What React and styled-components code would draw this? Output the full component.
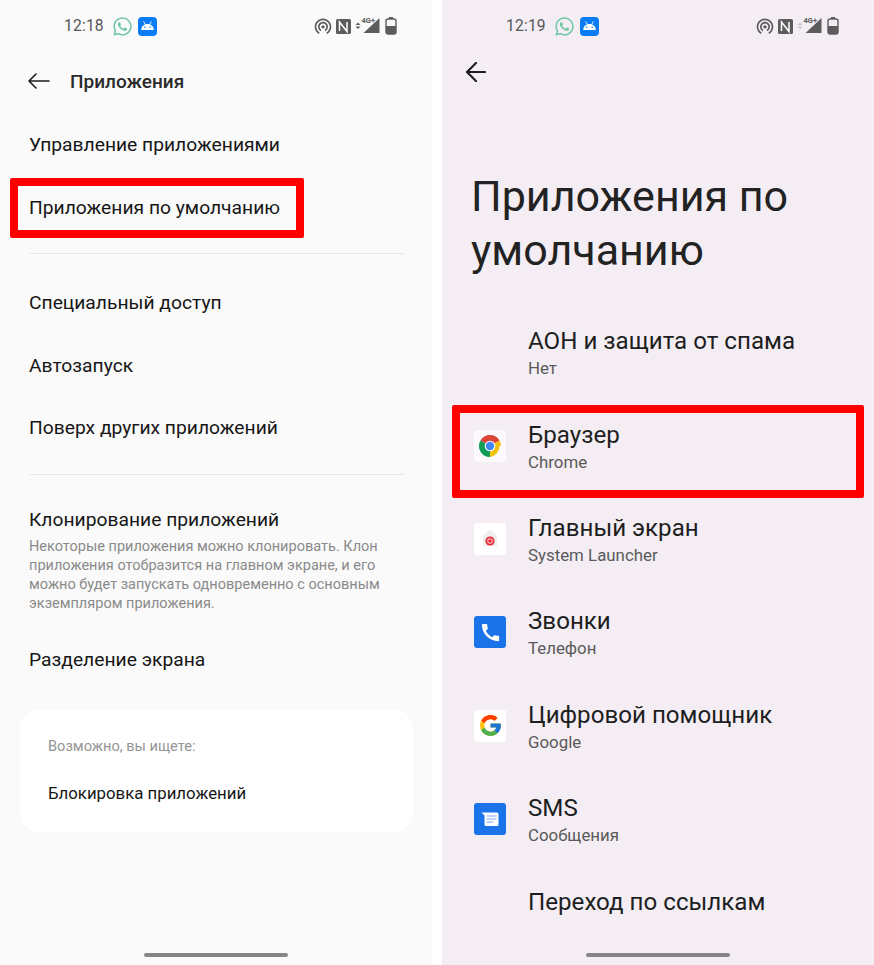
import React from 'react';
import styled, { createGlobalStyle } from 'styled-components';
import { FaWhatsapp } from 'react-icons/fa';
import { MdCall, MdWifiTethering } from 'react-icons/md';
import { FcGoogle } from 'react-icons/fc';

const GlobalStyle = createGlobalStyle`
  html, body {
    margin: 0;
    padding: 0;
    background: #ffffff;
  }
  * {
    box-sizing: border-box;
  }
`;

const Page = styled.div`
  display: grid;
  grid-template-columns: 432px 432px;
  column-gap: 10px;
  width: 874px;
  height: 965px;
  overflow: hidden;
  font-family: Roboto, "Noto Sans", sans-serif;
`;

const Phone = styled.section`
  display: flex;
  flex-direction: column;
  height: 965px;
  background: ${({ $bg }) => $bg};
  color: #1a1a1a;
`;

const Status = styled.div`
  display: flex;
  align-items: center;
  flex: none;
  height: 52px;
  padding: 0 35px 0 64px;
`;

const Time = styled.span`
  font-size: 15.6px;
  letter-spacing: 0.2px;
  color: #555555;
  width: 48px;
`;

const Tray = styled.div`
  display: flex;
  align-items: center;
  margin-left: auto;
`;

const Glyph = styled.svg`
  display: block;
  flex: none;
  margin-left: ${({ $gap }) => $gap || 0}px;
`;

const AndroidTile = styled.div`
  display: flex;
  align-items: center;
  justify-content: center;
  width: 19px;
  height: 19px;
  margin-left: 5px;
  border-radius: 4px;
  background: #0a7cf5;
`;

const HomeBar = styled.div`
  flex: none;
  width: 144px;
  height: 4px;
  margin: auto 0 8px 144px;
  border-radius: 2px;
  background: #858585;
`;

const TopBar = styled.div`
  display: flex;
  align-items: center;
  flex: none;
  height: 58px;
  padding-left: 28px;
`;

const TopTitle = styled.h1`
  margin: 0 0 0 20px;
  font-size: 19px;
  font-weight: 500;
  color: #2a2a2a;
`;

const Row = styled.div`
  position: relative;
  display: flex;
  align-items: center;
  flex: none;
  height: ${({ $h }) => $h}px;
  margin-top: ${({ $top }) => $top || 0}px;
  padding-left: 29px;
  font-size: 19.25px;
  color: #161616;
`;

const Mark = styled.div`
  position: absolute;
  top: ${({ $top }) => $top}px;
  left: 10px;
  width: ${({ $w }) => $w}px;
  height: ${({ $h }) => $h}px;
  border: 8px solid #ff0000;
  border-radius: 2px;
`;

const Rule = styled.hr`
  flex: none;
  width: 375px;
  height: 1px;
  margin: ${({ $before }) => $before}px 0 ${({ $after }) => $after}px 29px;
  border: 0;
  background: #e8e8e8;
`;

const Clone = styled.div`
  flex: none;
  padding: 0 29px;
`;

const CloneTitle = styled.div`
  font-size: 19.25px;
  line-height: 24px;
  color: #161616;
`;

const CloneText = styled.p`
  margin: 5px 0 15px;
  font-size: 14.53px;
  line-height: 19.3px;
  color: #8a8a8a;
`;

const Card = styled.div`
  flex: none;
  width: 393px;
  height: 123px;
  margin: 18px 0 0 20px;
  padding: 28px;
  border-radius: 20px;
  background: #ffffff;
`;

const CardLabel = styled.div`
  font-size: 14.6px;
  line-height: 18px;
  color: #959595;
`;

const CardLink = styled.div`
  margin-top: 27px;
  font-size: 16.8px;
  line-height: 22px;
  color: #161616;
`;

const BackBar = styled.div`
  display: flex;
  align-items: center;
  flex: none;
  height: 40px;
  padding-left: 24px;
`;

const Heading = styled.h1`
  flex: none;
  margin: 76.5px 0 30.6px 29px;
  font-size: 43px;
  font-weight: 400;
  line-height: 54.5px;
  color: #222222;
`;

const AppRow = styled.div`
  position: relative;
  display: flex;
  align-items: flex-start;
  flex: none;
  height: ${({ $short }) => ($short ? 60 : 93.45)}px;
  padding: 19px 0 0 32px;
`;

const Tile = styled.div`
  display: flex;
  align-items: center;
  justify-content: center;
  flex: none;
  width: 32px;
  height: 32px;
  margin-top: 9px;
  border-radius: 3px;
  background: ${({ $bg }) => $bg || 'transparent'};
`;

const AppText = styled.div`
  margin-left: 22px;
`;

const AppTitle = styled.div`
  font-size: 24.15px;
  line-height: 29px;
  color: #1e1e1e;
`;

const AppSub = styled.div`
  margin-top: 1px;
  font-size: 16.85px;
  line-height: 22px;
  color: #5a5a5a;
`;

const Arrow = ({ wide, tall, weight }) => (
  <Glyph width={wide} height={tall} viewBox={`0 0 ${wide} ${tall}`} fill="none" stroke="#1c1c1c" strokeWidth={weight} strokeLinecap="round" strokeLinejoin="round">
    <path d={`M1 ${tall / 2}H${wide - 1}M${tall / 2} 1L1 ${tall / 2}l${tall / 2 - 1} ${tall / 2 - 1}`} />
  </Glyph>
);

const AndroidHead = () => (
  <Glyph width="15" height="10" viewBox="0 0 15 10" fill="#ffffff">
    <path d="M1.2 9C1.2 5.5 4 3 7.5 3S13.8 5.5 13.8 9z" />
    <path d="M3.8 0.8l1.5 2.7M11.2 0.8L9.7 3.5" stroke="#ffffff" strokeWidth="0.9" strokeLinecap="round" />
    <circle cx="4.8" cy="6.2" r="0.8" fill="#0a7cf5" />
    <circle cx="10.2" cy="6.2" r="0.8" fill="#0a7cf5" />
  </Glyph>
);

const Nfc = () => (
  <Glyph $gap={3} width="15" height="15" viewBox="0 0 15 15">
    <rect width="15" height="15" rx="1.6" fill="#5c5c5c" />
    <path d="M3.5 12V3l7.5 9.5V3" fill="none" stroke="#ffffff" strokeWidth="1.5" />
  </Glyph>
);

const Signal = ({ dim }) => (
  <Glyph $gap={4} width="26" height="18" viewBox="0 0 26 18">
    <path d="M3 5.5L0.5 8h5zM3 12L0.5 9.5h5z" fill={dim ? '#c9c4c9' : '#5c5c5c'} />
    <path d="M24.5 1v15h-16z" fill="#5c5c5c" />
    <text x="6.5" y="6" fontSize="7.5" fontWeight="700" fontFamily="Roboto, sans-serif" fill="#5c5c5c">4G+</text>
  </Glyph>
);

const Battery = () => (
  <Glyph $gap={4} width="12" height="18" viewBox="0 0 12 18">
    <rect x="4" y="0" width="4" height="2" fill="#5c5c5c" />
    <rect x="1" y="2" width="10" height="15" rx="2" fill="none" stroke="#5c5c5c" strokeWidth="1.4" />
    <path d="M1 9h10v6a2 2 0 0 1-2 2H3a2 2 0 0 1-2-2z" fill="#5c5c5c" />
  </Glyph>
);

const StatusBar = ({ time, dim }) => (
  <Status>
    <Time>{time}</Time>
    <FaWhatsapp size={21} color="#6fc7a4" />
    <AndroidTile>
      <AndroidHead />
    </AndroidTile>
    <Tray>
      <MdWifiTethering size={20} color="#5c5c5c" />
      <Nfc />
      <Signal dim={dim} />
      <Battery />
    </Tray>
  </Status>
);

const ChromeIcon = () => (
  <Glyph width="24" height="24" viewBox="0 0 24 24">
    <path d="M12 12L2.47 6.5A11 11 0 0 1 21.53 6.5z" fill="#db4437" />
    <path d="M12 12h9.53A11 11 0 0 1 12 23z" fill="#f4c20d" />
    <path d="M21.53 6.5A11 11 0 0 1 23 12H12z" fill="#f4c20d" />
    <path d="M12 12v11A11 11 0 0 1 2.47 6.5z" fill="#0f9d58" />
    <circle cx="12" cy="12" r="5.3" fill="#ffffff" />
    <circle cx="12" cy="12" r="4.2" fill="#4285f4" />
  </Glyph>
);

const LauncherIcon = () => (
  <Glyph width="24" height="24" viewBox="0 0 24 24">
    <path d="M12 2l7 7v10h-14v-10z" fill="#eeeeee" />
    <circle cx="12" cy="14" r="4.6" fill="#ea2a35" />
    <circle cx="12" cy="14" r="2.8" fill="#ffc9cc" />
    <circle cx="12" cy="14" r="1.8" fill="#ea2a35" />
  </Glyph>
);

const MessagesIcon = () => (
  <Glyph width="18" height="15" viewBox="0 0 18 15">
    <path d="M0.5 0.5H16a1.5 1.5 0 0 1 1.5 1.5v10.5a1.5 1.5 0 0 1-1.5 1.5H5a1.5 1.5 0 0 1-1.5-1.5V3.5z" fill="#ffffff" />
    <path d="M5.5 4h10M5.5 7h10M5.5 10h7" stroke="#a9c7f5" strokeWidth="1.4" />
  </Glyph>
);

const leftTop = ['Специальный доступ', 'Автозапуск', 'Поверх других приложений'];

const apps = [
  { title: 'АОН и защита от спама', sub: 'Нет' },
  { title: 'Браузер', sub: 'Chrome', bg: '#fbf9fb', icon: <ChromeIcon />, marked: true },
  { title: 'Главный экран', sub: 'System Launcher', bg: '#ffffff', icon: <LauncherIcon /> },
  { title: 'Звонки', sub: 'Телефон', bg: '#1a73e8', icon: <MdCall size={23} color="#ffffff" /> },
  { title: 'Цифровой помощник', sub: 'Google', bg: '#ffffff', icon: <FcGoogle size={25} /> },
  { title: 'SMS', sub: 'Сообщения', bg: '#1a73e8', icon: <MessagesIcon /> },
];

export default function App() {
  return (
    <>
      <GlobalStyle />
      <Page>
        <Phone $bg="#fafafa">
          <StatusBar time="12:18" />
          <TopBar>
            <Arrow wide={22} tall={16} weight={1.6} />
            <TopTitle>Приложения</TopTitle>
          </TopBar>
          <Row $h={63} $top={3}>Управление приложениями</Row>
          <Row $h={63}>
            Приложения по умолчанию
            <Mark $top={2} $w={294} $h={60} />
          </Row>
          <Rule $before={14} $after={17} />
          <Row $h={62.5}>{leftTop[0]}</Row>
          <Row $h={62.5} $top={1}>{leftTop[1]}</Row>
          <Row $h={61}>{leftTop[2]}</Row>
          <Rule $before={15.5} $after={33} />
          <Clone>
            <CloneTitle>Клонирование приложений</CloneTitle>
            <CloneText>
              Некоторые приложения можно клонировать. Клон приложения отобразится на главном экране, и его можно будет запускать одновременно с основным экземпляром приложения.
            </CloneText>
          </Clone>
          <Row $h={62}>Разделение экрана</Row>
          <Card>
            <CardLabel>Возможно, вы ищете:</CardLabel>
            <CardLink>Блокировка приложений</CardLink>
          </Card>
          <HomeBar />
        </Phone>

        <Phone $bg="#f4eef4">
          <StatusBar time="12:19" dim />
          <BackBar>
            <Arrow wide={20} tall={20} weight={2.2} />
          </BackBar>
          <Heading>Приложения по умолчанию</Heading>
          {apps.map((app) => (
            <AppRow key={app.title}>
              <Tile $bg={app.bg}>{app.icon}</Tile>
              <AppText>
                <AppTitle>{app.title}</AppTitle>
                <AppSub>{app.sub}</AppSub>
              </AppText>
              {app.marked && <Mark $top={3.5} $w={412} $h={93} />}
            </AppRow>
          ))}
          <AppRow $short>
            <Tile />
            <AppText>
              <AppTitle>Переход по ссылкам</AppTitle>
            </AppText>
          </AppRow>
          <HomeBar />
        </Phone>
      </Page>
    </>
  );
}
